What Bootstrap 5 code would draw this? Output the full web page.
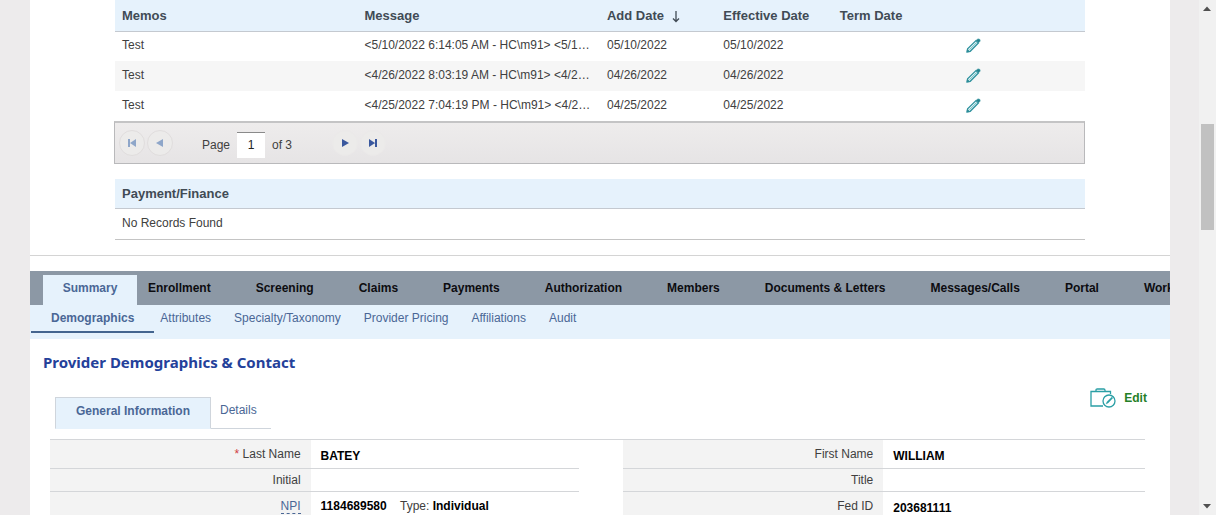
<!DOCTYPE html>
<html lang="en">
<head>
<meta charset="utf-8">
<meta name="viewport" content="width=device-width, initial-scale=1">
<title>Provider Demographics</title>
<link href="https://cdn.jsdelivr.net/npm/bootstrap@5.3.0/dist/css/bootstrap.min.css" rel="stylesheet">
<style>
body{font-family:"Liberation Sans",Arial,sans-serif;font-size:12px;line-height:18px;color:#404040;background:#edebec}
a{color:#4a6796;text-decoration:none}
.sheet{margin:0 29px 0 30px;min-width:0}
.records{padding:0 85px}
.grid{table-layout:fixed;margin:0;width:100%;color:inherit}
.grid th,.grid td{padding:0 7px;height:30px;border:0;text-align:left;vertical-align:middle;white-space:nowrap}
.grid td{padding-bottom:3px}
.grid thead th{font-size:13px;color:#414b55;background:#e6f2fc;border-bottom:1px solid #c4c9d0;height:31px;padding-top:2px}
.grid tbody tr:nth-child(even) td{background:#f6f6f6}
.grid .tool{padding:0 17px 2px}
.plain-icon{border:0;background:none;padding:0;display:block;line-height:1}
.pager{height:43px;border:1px solid #b9b9bb;border-top-width:2px;border-top-color:#c4c4c5;background:linear-gradient(#eeecec,#e6e4e5);padding:0 4px 1px;margin:0 0 15px -1px}
.round{width:26px;height:26px;border-radius:50%;border:1px solid #e0dddd;background:#ecebea;padding:0;display:flex;align-items:center;justify-content:center;color:#3a589e}
.round:disabled{color:#8ea6c9}
.round.flat{border-color:#ebe9e9}
.round.prev{margin:0 29px 0 2px}
.round.last{margin-left:2px}
.page-no{width:28px;height:26px;border:0;border-top:1px solid #8a8a8a;padding:0;text-align:center;color:#222;background:#fff;margin:4px 7px 0}
.grid.finance thead th{height:29px}
.grid.finance td{border-bottom:1px solid #c4c4c4;height:31px;padding-bottom:2px}
.divider{border-top:1px solid #d4d4d4;margin-top:15px;height:16px}
.mainnav{background:#8c98a5;height:34px;padding:4px 0 0 13px;gap:45px;overflow:hidden;white-space:nowrap;font-weight:bold}
.mainnav a{color:#0c0c10;line-height:26px;flex:none}
.mainnav a.active{background:#e6f2fc;color:#4a6796;height:30px;width:94px;text-align:center;margin-right:-34px}
.subnav{background:#e6f2fc;height:34px;gap:23px;padding-left:1px}
.subnav a{line-height:26px}
.subnav a.active{font-weight:bold;height:28px;padding:0 20px;border-bottom:2px solid #44658f;margin-right:-17px}
.title{font:bold 15px/22px "Noto Sans",sans-serif;color:#24419a;margin:12px 0 0 13px}
.toolbar{padding:12px 23px 0 25px}
.tabs{margin-top:12px}
.tabs a{border-bottom:1px solid #cfd5dc;line-height:26px;padding:0 14px 0 9px;height:32px;white-space:nowrap}
.tabs a.active{font-weight:bold;background:#e6f2fc;border:1px solid #cfd5dc;border-bottom-color:#e6f2fc;padding:0;text-align:center;width:156px}
.edit{font-weight:bold;color:#258026;gap:8px;height:26px}
.details{table-layout:fixed;margin:10px 25px 0 20px;width:calc(100% - 45px);border-top:1px solid #d4d6d9}
.details th,.details td{height:23px;padding:2px 10px 0;border-bottom:1px solid #d4d6d9;line-height:17px;vertical-align:middle}
.details tr:first-child>*{height:29px}
.details tr:last-child>*{height:29px}
.details th{background:#f3f3f3;text-align:right;font-weight:normal}
.details td{color:#000;font-weight:bold}
.details td.space{border:0}
.details .low{padding-top:5px}
.details .type{font-weight:normal;color:#404040;margin-left:10px}
.req{color:#d04040}
.npi{border-bottom:1px dashed #4a6796;display:inline-block;line-height:14px}
.scrollbar{width:17px;background:#f1f1f1;padding:6px 2px;flex:none}
.thumb{height:106px;background:#c1c1c1;margin-top:22vh}
</style>
</head>
<body>
<svg class="d-none" xmlns="http://www.w3.org/2000/svg">
<symbol id="pencil" viewBox="0 0 15 15"><path d="M1 14l.6-3.200L10 2.600l2.400 2.400L4.200 13.300z" fill="#e6f6f7" stroke="#2f929e" stroke-width="1.300"/><path d="M1 14l.5-2.700 2.200 2.200zM10.300 2.200L12 .9Q14.800 1 14 3.200L12.700 4.600z" fill="#28808c" stroke="#2f929e" stroke-width=".7"/><path d="M3.500 11.700L10.800 4.400" stroke="#5fb3bb" stroke-width=".9"/></symbol>
</svg>
<div class="d-flex vh-100 overflow-hidden">
<main class="sheet bg-white flex-fill overflow-hidden">
<section class="records">
<table class="grid">
<colgroup><col style="width:25%"><col style="width:25%"><col style="width:12%"><col style="width:12%"><col style="width:12%"><col></colgroup>
<thead><tr><th>Memos</th><th>Message</th><th>Add Date <svg class="ms-1" width="8" height="12" viewBox="0 0 8 12" fill="none" stroke="#414b55" stroke-width="1.300"><path d="M4 0v10.500M1 7.500l3 3 3-3"/></svg></th><th>Effective Date</th><th>Term Date</th><th></th></tr></thead>
<tbody>
<tr><td>Test</td><td>&lt;5/10/2022 6:14:05 AM - HC\m91&gt; &lt;5/1…</td><td>05/10/2022</td><td>05/10/2022</td><td></td><td class="tool"><button class="plain-icon" aria-label="Edit memo"><svg width="15" height="15"><use href="#pencil"/></svg></button></td></tr>
<tr><td>Test</td><td>&lt;4/26/2022 8:03:19 AM - HC\m91&gt; &lt;4/2…</td><td>04/26/2022</td><td>04/26/2022</td><td></td><td class="tool"><button class="plain-icon" aria-label="Edit memo"><svg width="15" height="15"><use href="#pencil"/></svg></button></td></tr>
<tr><td>Test</td><td>&lt;4/25/2022 7:04:19 PM - HC\m91&gt; &lt;4/2…</td><td>04/25/2022</td><td>04/25/2022</td><td></td><td class="tool"><button class="plain-icon" aria-label="Edit memo"><svg width="15" height="15"><use href="#pencil"/></svg></button></td></tr>
</tbody>
</table>
<div class="pager d-flex align-items-center">
<button class="round" disabled aria-label="First page"><svg width="8" height="8" fill="currentColor"><path d="M0 0h2v8H0zM8 0v8L2 4z"/></svg></button>
<button class="round prev" disabled aria-label="Previous page"><svg width="8" height="8" fill="currentColor"><path d="M7 0v8L0 4z"/></svg></button>
<label for="page" class="pt-1">Page</label>
<input id="page" class="page-no" value="1"><span class="pt-1 pe-3">of 3</span>
<button class="round flat ms-4" aria-label="Next page"><svg width="8" height="8" fill="currentColor"><path d="M1 0v8l7-4z"/></svg></button>
<button class="round flat last" aria-label="Last page"><svg width="8" height="8" fill="currentColor"><path d="M6 0h2v8H6zM0 0v8l6-4z"/></svg></button>
</div>
<table class="grid finance"><thead><tr><th>Payment/Finance</th></tr></thead><tbody><tr><td>No Records Found</td></tr></tbody></table>
</section>
<div class="divider"></div>
<nav class="mainnav d-flex"><a href="#" class="active">Summary</a><a href="#">Enrollment</a><a href="#">Screening</a><a href="#">Claims</a><a href="#">Payments</a><a href="#">Authorization</a><a href="#">Members</a><a href="#">Documents &amp; Letters</a><a href="#">Messages/Calls</a><a href="#">Portal</a><a href="#">Work</a></nav>
<nav class="subnav d-flex"><a href="#" class="active">Demographics</a><a href="#">Attributes</a><a href="#">Specialty/Taxonomy</a><a href="#">Provider Pricing</a><a href="#">Affiliations</a><a href="#">Audit</a></nav>
<h1 class="title">Provider Demographics &amp; Contact</h1>
<div class="toolbar d-flex justify-content-between align-items-start">
<nav class="tabs d-flex"><a href="#" class="active">General Information</a><a href="#">Details</a></nav>
<a href="#" class="edit d-flex align-items-center"><svg width="26" height="20" viewBox="0 0 26 20" fill="none" stroke="#2a9fa5" stroke-width="1.300"><path d="M13 18H1V3.500h19.500V6M6 3.500V2.200Q6 1 7.200 1h6.600Q15 1 15 2.200v1.300"/><circle cx="19" cy="13" r="6"/><path d="M16 16l1-2.300 4.800-4.700 1.100 1.100-4.700 4.800z" fill="#2a9fa5" stroke-width=".3"/></svg>Edit</a>
</div>
<table class="details">
<colgroup><col style="width:23.8%"><col style="width:24.5%"><col style="width:4%"><col style="width:23.8%"><col></colgroup>
<tbody>
<tr><th><span class="req">*</span> Last Name</th><td class="low">BATEY</td><td class="space"></td><th>First Name</th><td class="low">WILLIAM</td></tr>
<tr><th>Initial</th><td></td><td class="space"></td><th>Title</th><td></td></tr>
<tr><th><a href="#" class="npi">NPI</a></th><td>1184689580 <span class="type">Type:</span> Individual</td><td class="space"></td><th>Fed ID</th><td class="low">203681111</td></tr>
</tbody>
</table>
</main>
<div class="scrollbar d-flex flex-column align-items-center" aria-hidden="true">
<svg width="8" height="5" fill="#505050"><path d="M0 5l4-4.500L8 5z"/></svg>
<div class="thumb w-100"></div>
<svg class="mt-auto" width="8" height="5" fill="#505050"><path d="M0 0l4 4.500L8 0z"/></svg>
</div>
</div>
<script src="https://cdn.jsdelivr.net/npm/bootstrap@5.3.0/dist/js/bootstrap.bundle.min.js"></script>
</body>
</html>
